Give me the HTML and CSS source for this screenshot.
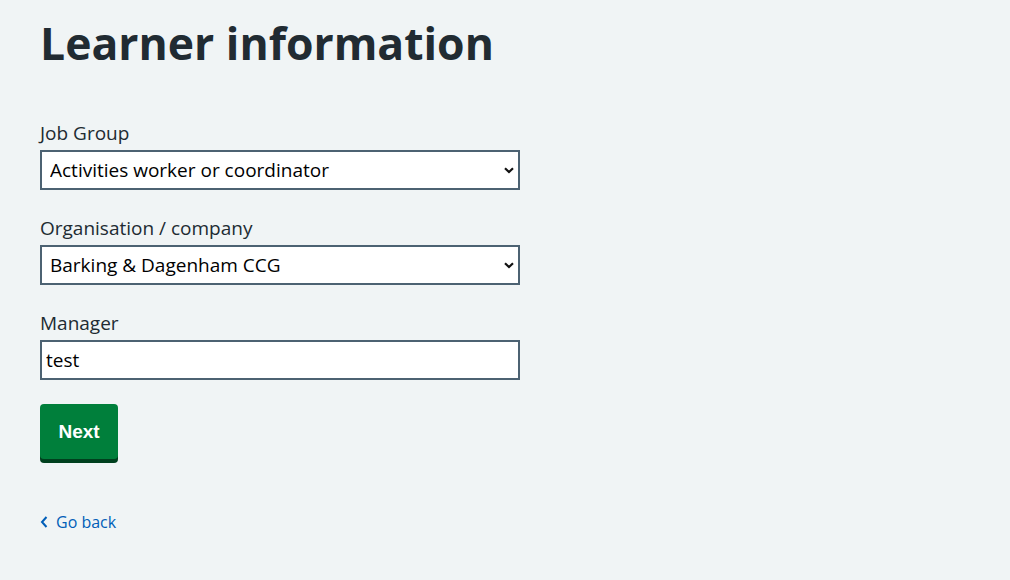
FILE: index.html
```html
<!DOCTYPE html>
<html lang="en">
<head>
<meta charset="utf-8">
<title>Learner information</title>
<link rel="stylesheet" href="styles.css">
</head>
<body>
<main class="page">
  <h1 class="title">Learner information</h1>
  <form class="form">
    <div class="group">
      <label class="label" for="job">Job Group</label>
      <div class="select-wrap">
        <select id="job" class="select">
          <option>Activities worker or coordinator</option>
        </select>
        <svg class="chev" width="10" height="7" viewBox="0 0 10 7"><path d="M1 1.2 L5 5 L9 1.2" fill="none" stroke="#111" stroke-width="2.2"/></svg>
      </div>
    </div>
    <div class="group">
      <label class="label" for="org">Organisation / company</label>
      <div class="select-wrap">
        <select id="org" class="select">
          <option>Barking &amp; Dagenham CCG</option>
        </select>
        <svg class="chev" width="10" height="7" viewBox="0 0 10 7"><path d="M1 1.2 L5 5 L9 1.2" fill="none" stroke="#111" stroke-width="2.2"/></svg>
      </div>
    </div>
    <div class="group">
      <label class="label" for="mgr">Manager</label>
      <input id="mgr" class="input" type="text" value="test">
    </div>
    <button type="button" class="button">Next</button>
  </form>
  <a class="back" href="#">
    <svg class="back-chev" width="8" height="12" viewBox="0 0 8 12"><path d="M6.5 1 L2 6 L6.5 11" fill="none" stroke="#005eb8" stroke-width="2"/></svg>
    <span>Go back</span>
  </a>
</main>
</body>
</html>
```
FILE: styles.css
```css
html, body {
  margin: 0;
  padding: 0;
  background: #f0f4f5;
}
body {
  font-family: "Open Sans", "Noto Sans", "Liberation Sans", sans-serif;
  color: #212b32;
}
.page {
  padding: 13px 40px 0 40px;
  display: flex;
  flex-direction: column;
  align-items: flex-start;
}
.title {
  font-family: "Open Sans", sans-serif;
  font-size: 44.5px;
  font-weight: 700;
  line-height: 60px;
  margin: 0 0 46px 0;
  letter-spacing: 0;
}
.form {
  display: flex;
  flex-direction: column;
  align-items: flex-start;
}
.group {
  display: flex;
  flex-direction: column;
  margin-bottom: 24px;
}
.label {
  font-size: 19px;
  line-height: 28px;
  margin-bottom: 3px;
  color: #212b32;
}
.select-wrap {
  position: relative;
  width: 480px;
}
.select {
  appearance: none;
  -webkit-appearance: none;
  box-sizing: border-box;
  width: 480px;
  height: 40px;
  border: 2px solid #4c6272;
  border-radius: 0;
  background: #fff;
  font-family: inherit;
  font-size: 19px;
  color: #000;
  padding: 0 30px 0 8px;
  margin: 0;
}
.chev {
  position: absolute;
  right: 6px;
  top: 17px;
  pointer-events: none;
}
.input {
  box-sizing: border-box;
  width: 480px;
  height: 40px;
  border: 2px solid #4c6272;
  border-radius: 0;
  background: #fff;
  font-family: inherit;
  font-size: 19px;
  color: #000;
  padding: 0 4px;
  margin: 0;
}
.button {
  font-family: "Liberation Sans", Arial, sans-serif;
  font-weight: 700;
  font-size: 19px;
  color: #fff;
  background: #007f3b;
  border: 0;
  border-radius: 4px;
  box-shadow: 0 4px 0 #00401e;
  width: 78px;
  height: 55px;
  padding: 0;
  margin: 0;
  cursor: pointer;
}
.back {
  margin-top: 51px;
  display: flex;
  align-items: center;
  gap: 8px;
  color: #005eb8;
  text-decoration: none;
  font-size: 16px;
  line-height: 24px;
}
.back-chev {
  display: block;
}
```
